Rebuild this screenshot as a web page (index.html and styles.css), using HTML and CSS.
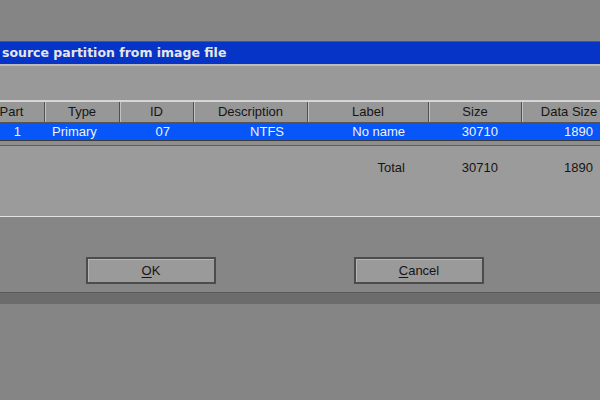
FILE: index.html
```html
<!DOCTYPE html>
<html lang="en">
<head>
  <meta charset="UTF-8" />
  <title>Restore partition</title>
  <link rel="stylesheet" href="styles.css">
</head>
<body>

<div class="dialog">
  <!-- Title -->
  <div class="title-bar">source partition from image file</div>
  <div class="info-panel"></div>

  <!-- Partition list -->
  <div class="part-table">
    <div class="part-head">
      <div class="cell">Part</div>
      <div class="cell">Type</div>
      <div class="cell">ID</div>
      <div class="cell">Description</div>
      <div class="cell">Label</div>
      <div class="cell">Size</div>
      <div class="cell">Data Size</div>
    </div>
    <div class="part-row selected">
      <div class="cell num">1</div>
      <div class="cell type">Primary</div>
      <div class="cell num">07</div>
      <div class="cell num">NTFS</div>
      <div class="cell num">No name</div>
      <div class="cell num">30710</div>
      <div class="cell num">1890</div>
    </div>
    <div class="list-gap"></div>
    <div class="totals">
      <div class="part-row">
        <div class="cell"></div>
        <div class="cell"></div>
        <div class="cell"></div>
        <div class="cell"></div>
        <div class="cell num">Total</div>
        <div class="cell num">30710</div>
        <div class="cell num">1890</div>
      </div>
    </div>
  </div>

  <!-- Buttons -->
  <div class="button-area">
    <div class="btn"><u>O</u>K</div>
    <div class="btn"><u>C</u>ancel</div>
  </div>
  <div class="bottom-band"></div>
</div>

</body>
</html>
```

FILE: styles.css
```css
body {
  margin: 0;
  width: 600px;
  height: 400px;
  overflow: hidden;
  background: #858585;
  font-family: 'Liberation Sans', Arial, sans-serif;
  font-size: 13px;
  color: #151515;
}

.dialog {
  margin-top: 41px;
}

.title-bar {
  height: 22px;
  line-height: 22px;
  padding-left: 2px;
  border-top: 1px solid #555;
  border-bottom: 2px solid #bcbcbc;
  background: #0634c6;
  color: #e6e6e6;
  font-family: 'DejaVu Sans', sans-serif;
  font-weight: bold;
  font-size: 12.5px;
}

.info-panel {
  height: 34px;
  background: #999;
}

.part-table {
  margin-left: -21px;
  width: 638px;
  border-top: 2px solid #d6d6d6;
}

.part-head,
.part-row {
  display: grid;
  grid-template-columns: 66px 75px 74px 114px 121px 93px 95px;
}

.part-head {
  height: 20px;
  background: #979797;
  border-bottom: 1px solid #555;
}

.part-head .cell {
  text-align: center;
  line-height: 20px;
  border-right: 1px solid #505050;
  box-shadow: inset 1px 0 #c2c2c2;
}

.part-row {
  height: 17px;
  line-height: 17px;
}

.part-row.selected {
  background: #0656fa;
  color: #f2f2f2;
  border-bottom: 1px solid #3a3a3a;
}

.cell.num {
  text-align: right;
  padding-right: 24px;
}

.cell.type {
  padding-left: 7px;
}

.list-gap {
  height: 4px;
  background: #8e8e8e;
  border-bottom: 1px solid #5e5e5e;
}

.totals {
  height: 71px;
  padding-top: 13px;
  box-sizing: border-box;
  background: #9b9b9b;
  border-bottom: 1px solid #e2e2e2;
}

.button-area {
  height: 75px;
  padding: 40px 0 0 86px;
  box-sizing: border-box;
  display: flex;
  gap: 138px;
  background: #868686;
}

.btn {
  width: 126px;
  height: 23px;
  line-height: 23px;
  text-align: center;
  background: #9a9a9a;
  border: 2px solid #4c4c4c;
  box-shadow: inset 1px 1px #b4b4b4;
}

.btn u {
  text-underline-offset: 2px;
}

.bottom-band {
  height: 11px;
  background: #6c6c6c;
  border-top: 1px solid #5a5a5a;
}
```
